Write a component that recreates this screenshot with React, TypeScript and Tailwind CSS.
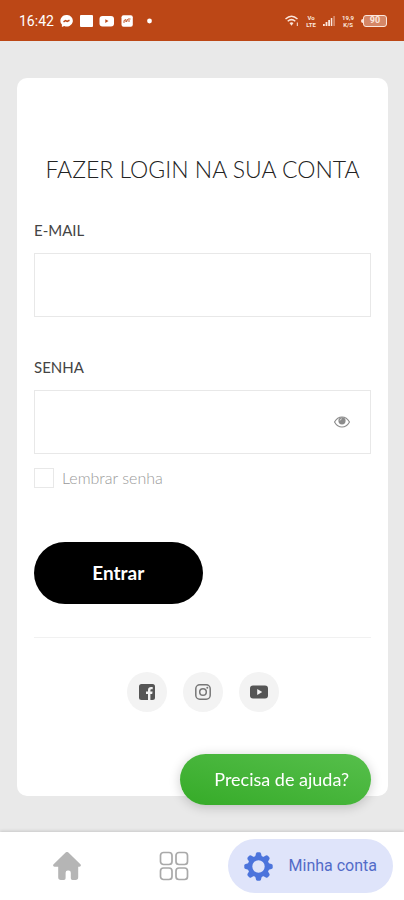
import { useState } from 'react'

function StatusBar() {
  return (
    <header className="flex h-[41px] items-center justify-between bg-[#bc4716] pl-[19px] pr-[17px] font-['Roboto',sans-serif] text-white">
      <div className="flex items-center">
        <span className="w-[41px] text-[14px] leading-4">16:42</span>
        <svg className="h-3 w-[94px]" viewBox="0 0 94 12" fill="currentColor">
          <path d="M6.5 0a6 5.8 0 0 0-4.6 9.6V12l2.3-1A6 5.8 0 1 0 6.500 0Z" />
          <path d="M3.500 6.800l2-1.300 1.700.9L9.500 5.300" fill="none" stroke="#bc4716" strokeWidth="1.500" />
          <rect x="20" y="0" width="13" height="12" rx="1" />
          <rect x="39.500" y="1" width="14.500" height="10.500" rx="3" />
          <path d="M45.300 4.300v3.600l3.200-1.800Z" fill="#bc4716" />
          <rect x="61.500" y="0.300" width="11.300" height="11.500" rx="2" />
          <path d="M64 8V5.500l2-1V7l2-3h2.500M67.500 6H70" fill="none" stroke="#bc4716" strokeWidth="0.900" />
          <circle cx="89.500" cy="6" r="2.400" />
        </svg>
      </div>
      <div className="flex items-center gap-[6px] text-[#fbe6dc]">
        <svg className="h-3 w-[14px]" viewBox="0 0 14 12" fill="none" stroke="currentColor" strokeWidth="1.500">
          <path d="M0.500 4Q6.500-1.500 12.500 4M2.700 6.300Q6.500 3 10.300 6.300" />
          <path d="M4.500 8Q6.500 6.500 8.500 8L6.500 10.800Z" fill="currentColor" stroke="none" />
          <path d="M12.300 7.500v3.500" strokeWidth="1" />
        </svg>
        <span className="flex w-3 flex-col items-center text-[6px] font-bold leading-[7px]">
          <span>Vo</span>
          <span>LTE</span>
        </span>
        <svg className="h-[10px] w-3" viewBox="0 0 12 10" fill="currentColor">
          <path d="M0 8h1.800v2H0ZM2.600 6h1.800v4H2.600ZM5.200 4H7v6H5.200ZM7.800 2h1.500v8H7.800Z" />
          <path d="M10.200 0H12v10h-1.800Z" opacity="0.400" />
        </svg>
        <span className="flex w-[14px] flex-col items-center text-[6px] font-bold leading-[7px]">
          <span>19,9</span>
          <span>K/S</span>
        </span>
        <span className="flex items-center">
          <span className="h-1 w-[2px] rounded-l-sm bg-[#fbe6dc]" />
          <span className="flex h-3 w-6 items-center justify-center rounded-[3px] border border-[#fbe6dc] bg-[#d58767] text-[9px] font-bold leading-none">
            90
          </span>
        </span>
      </div>
    </header>
  )
}

function EyeIcon() {
  return (
    <svg className="h-3 w-4" viewBox="0 0 16 12" fill="none" stroke="#8b8b8b">
      <path d="M0.500 6C2.500 2.500 5 1 8 1s5.500 1.500 7.500 5C13.500 9.500 11 11 8 11S2.500 9.500 0.500 6Z" strokeWidth="1.100" />
      <circle cx="8" cy="4.800" r="3.600" fill="#8b8b8b" stroke="none" />
      <path d="M6 4.500A2 2 0 0 1 7.800 2.800" stroke="#e8e8e8" strokeWidth="0.900" />
    </svg>
  )
}

function FacebookIcon() {
  return (
    <svg className="size-4" viewBox="0 0 16 16">
      <rect width="16" height="16" rx="2.500" fill="#555" />
      <path
        d="M9 16V10H7V7.500h2V6c0-2 1.100-3.100 3-3.100h1.700v2.300h-1.200c-.8 0-1.100.4-1.100 1.100v1.200h2.200L13.200 10h-1.800v6Z"
        fill="#f3f3f3"
      />
    </svg>
  )
}

function InstagramIcon() {
  return (
    <svg className="size-4" viewBox="0 0 16 16" fill="none" stroke="#777" strokeWidth="1.500">
      <rect x="0.800" y="0.800" width="14.400" height="14.400" rx="4" />
      <circle cx="8" cy="8" r="3.300" />
      <circle cx="12.300" cy="3.700" r="1" fill="#777" stroke="none" />
    </svg>
  )
}

function YoutubeIcon() {
  return (
    <svg className="h-[14px] w-[18px]" viewBox="0 0 18 14">
      <rect y="0.500" width="18" height="13" rx="3" fill="#555" />
      <path d="M7.200 4v6l5-3Z" fill="#f3f3f3" />
    </svg>
  )
}

function HomeIcon() {
  return (
    <svg className="h-7 w-[28px]" viewBox="0 0 28 28" fill="#b5b5b5">
      <path d="M12.600.6a2 2 0 0 1 2.800 0l12 11.600c1 1 .4 2.500-1 2.500h-1.200v10.600a2.700 2.700 0 0 1-2.700 2.700h-3a1.700 1.700 0 0 1-1.700-1.700v-5.500a2.200 2.200 0 0 0-2.200-2.200h-.8a2.200 2.200 0 0 0-2.200 2.200v5.500a1.700 1.700 0 0 1-1.700 1.700h-3a2.700 2.700 0 0 1-2.700-2.700V14.700H1.600c-1.400 0-2-1.500-1-2.500Z" />
    </svg>
  )
}

function GridIcon() {
  return (
    <svg className="size-[30px]" viewBox="0 0 30 30" fill="none" stroke="#a9a9a9" strokeWidth="1.700">
      <rect x="1.500" y="1.500" width="11.500" height="12" rx="3" />
      <rect x="17" y="1.500" width="11.500" height="12" rx="3" />
      <rect x="1.500" y="17" width="11.500" height="11.500" rx="3" />
      <rect x="17" y="17" width="11.500" height="11.500" rx="3" />
    </svg>
  )
}

const teeth = [0, 45, 90, 135, 180, 225, 270, 315]

function GearIcon() {
  return (
    <svg className="size-[29px]" viewBox="0 0 29 29" fill="#4c74dc">
      {teeth.map((angle) => (
        <path
          key={angle}
          d="M10.800 6 12 1.600Q12.400.3 13.500.3h2q1.100 0 1.500 1.300L18.200 6Z"
          transform={`rotate(${angle} 14.500 14.500)`}
        />
      ))}
      <circle cx="14.500" cy="14.500" r="8.500" fill="none" stroke="#4c74dc" strokeWidth="4.600" />
    </svg>
  )
}

const socials = [
  { name: 'Facebook', Icon: FacebookIcon },
  { name: 'Instagram', Icon: InstagramIcon },
  { name: 'YouTube', Icon: YoutubeIcon },
]

function LoginForm() {
  const [showPassword, setShowPassword] = useState(false)

  return (
    <form className="flex flex-col" onSubmit={(e) => e.preventDefault()}>
      <label htmlFor="email" className="text-[15px] leading-5 text-[#444]">
        E-MAIL
      </label>
      <input id="email" type="email" className="mt-[13px] h-16 w-full border border-[#e8e8e8] px-4 outline-none" />

      <label htmlFor="password" className="mt-10 text-[15px] leading-5 text-[#444]">
        SENHA
      </label>
      <div className="mt-[13px] flex h-16 items-center border border-[#e8e8e8] pr-5">
        <input
          id="password"
          type={showPassword ? 'text' : 'password'}
          className="h-full min-w-0 flex-1 px-4 outline-none"
        />
        <button type="button" aria-label="Mostrar senha" onClick={() => setShowPassword(!showPassword)}>
          <EyeIcon />
        </button>
      </div>

      <div className="mt-[14px] flex items-center gap-2">
        <input
          id="remember"
          type="checkbox"
          className="size-5 appearance-none border border-[#e8e8e8] checked:bg-gray-400"
        />
        <label htmlFor="remember" className="text-[16px] font-light leading-5 text-[#999]">
          Lembrar senha
        </label>
      </div>

      <button
        type="submit"
        className="mt-[54px] h-[62px] w-1/2 self-start rounded-full bg-black text-[19px] font-bold text-white"
      >
        Entrar
      </button>
    </form>
  )
}

export default function App() {
  return (
    <div className="flex min-h-screen flex-col bg-[#e9e9e9] font-['Lato',sans-serif]">
      <StatusBar />

      <main className="flex-1 pb-9 pl-[17px] pr-4 pt-[37px]">
        <section className="rounded-[10px] bg-white px-[17px] pb-[84px] pt-[75px]">
          <h1 className="mb-[35px] text-center text-[23px] font-light leading-8 text-[#222]">
            FAZER LOGIN NA SUA CONTA
          </h1>
          <LoginForm />
          <div className="mt-[33px] flex justify-center gap-4 border-t border-[#f1f1f1] pt-[34px]">
            {socials.map(({ name, Icon }) => (
              <a
                key={name}
                href="#"
                aria-label={name}
                className="flex size-10 items-center justify-center rounded-full bg-[#f3f3f3]"
              >
                <Icon />
              </a>
            ))}
          </div>
        </section>
      </main>

      <button className="fixed bottom-[95px] right-[33px] h-[51px] rounded-full bg-linear-to-tr from-[#35ab27] to-[#56bf4b] pl-[34px] pr-[22px] text-[18px] text-white shadow-[0_2px_12px_rgba(0,0,0,0.2)]">
        Precisa de ajuda?
      </button>

      <nav className="flex h-[68px] items-center bg-white pr-[11px] shadow-[0_-1px_3px_rgba(0,0,0,0.15)]">
        <div className="flex flex-1 items-center justify-around pl-[14px]">
          <a href="#" aria-label="Início">
            <HomeIcon />
          </a>
          <a href="#" aria-label="Categorias">
            <GridIcon />
          </a>
        </div>
        <a
          href="#"
          className="flex h-[54px] items-center gap-4 rounded-full bg-[#dfe4fa] px-4 font-['Roboto',sans-serif] text-[16px] text-[#526bc8]"
        >
          <GearIcon />
          Minha conta
        </a>
      </nav>
    </div>
  )
}
